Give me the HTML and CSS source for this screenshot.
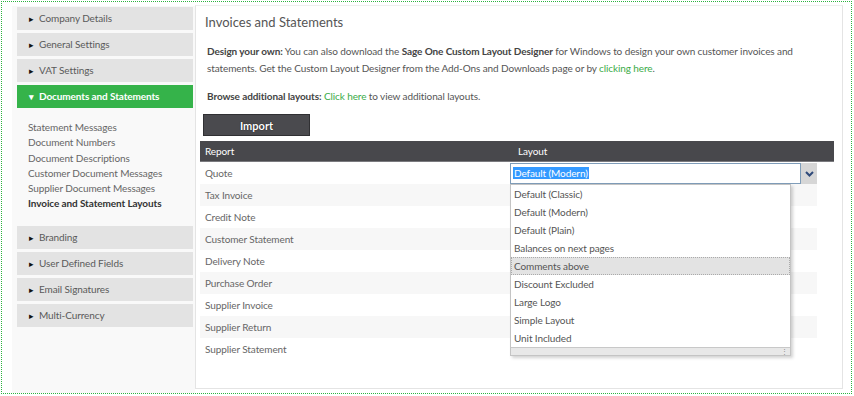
FILE: index.html
```html
<!DOCTYPE html>
<html lang="en">
<head>
    <meta charset="UTF-8">
    <title>Invoices and Statements</title>
    <link rel="stylesheet" href="styles.css">
</head>
<body>

<div class="frame">
    <!-- 左侧设置菜单 -->
    <div class="sidebar">
        <div class="menu-item"><span class="arrow">&#9656;</span>Company Details</div>
        <div class="menu-item"><span class="arrow">&#9656;</span>General Settings</div>
        <div class="menu-item"><span class="arrow">&#9656;</span>VAT Settings</div>
        <div class="menu-item open"><span class="arrow">&#9662;</span>Documents and Statements</div>
        <ul class="sub-menu">
            <li>Statement Messages</li>
            <li>Document Numbers</li>
            <li>Document Descriptions</li>
            <li>Customer Document Messages</li>
            <li>Supplier Document Messages</li>
            <li class="current">Invoice and Statement Layouts</li>
        </ul>
        <div class="menu-item"><span class="arrow">&#9656;</span>Branding</div>
        <div class="menu-item"><span class="arrow">&#9656;</span>User Defined Fields</div>
        <div class="menu-item"><span class="arrow">&#9656;</span>Email Signatures</div>
        <div class="menu-item"><span class="arrow">&#9656;</span>Multi-Currency</div>
    </div>

    <!-- 内容面板 -->
    <div class="panel">
        <h1 class="title">Invoices and Statements</h1>
        <p class="text">
            <b>Design your own:</b> You can also download the <b>Sage One Custom Layout Designer</b> for Windows to design your own customer invoices and<br>
            statements. Get the Custom Layout Designer from the Add-Ons and Downloads page or by <a href="#">clicking here</a>.
        </p>
        <p class="text">
            <b>Browse additional layouts:</b> <a href="#">Click here</a> to view additional layouts.
        </p>
        <button class="btn-import">Import</button>

        <div class="layout-table">
            <div class="table-head">
                <div class="col-report">Report</div>
                <div class="col-layout">Layout</div>
            </div>
            <div class="row">
                <div class="col-report">Quote</div>
                <div class="col-layout">
                    <div class="select">
                        <span class="select-value"><span class="selected-text">Default (Modern)</span></span>
                        <span class="select-btn">
                            <svg width="9" height="6" viewBox="0 0 9 6"><path d="M1 1 L4.5 4.5 L8 1" fill="none" stroke="#2f4a7a" stroke-width="2"/></svg>
                        </span>
                    </div>
                    <ul class="dropdown">
                        <li>Default (Classic)</li>
                        <li>Default (Modern)</li>
                        <li>Default (Plain)</li>
                        <li>Balances on next pages</li>
                        <li class="hover">Comments above</li>
                        <li>Discount Excluded</li>
                        <li>Large Logo</li>
                        <li>Simple Layout</li>
                        <li>Unit Included</li>
                        <li class="grip"><span class="grip-dots">&#8942;</span></li>
                    </ul>
                </div>
            </div>
            <div class="row"><div class="col-report">Tax Invoice</div></div>
            <div class="row"><div class="col-report">Credit Note</div></div>
            <div class="row"><div class="col-report">Customer Statement</div></div>
            <div class="row"><div class="col-report">Delivery Note</div></div>
            <div class="row"><div class="col-report">Purchase Order</div></div>
            <div class="row"><div class="col-report">Supplier Invoice</div></div>
            <div class="row"><div class="col-report">Supplier Return</div></div>
            <div class="row"><div class="col-report">Supplier Statement</div></div>
        </div>
    </div>
</div>

</body>
</html>
```

FILE: styles.css
```css
/* 基本样式 */
body {
    margin: 0;
    background: #fff;
    font-family: "Lato", "Noto Sans", sans-serif;
    font-size: 10px;
    letter-spacing: -0.1px;
    color: #555;
}
.frame {
    margin: 1px;
    width: 849px;
    height: 391px;
    border: 1px dotted #2bb43f;
    display: flex;
}
/* 左侧菜单 */
.sidebar {
    width: 183px;
    box-sizing: border-box;
    margin: 4px 0 0 10px;
    padding: 1px 0 0 5px;
    background: #f9f9f9;
}
.menu-item {
    width: 176px;
    height: 23px;
    line-height: 23px;
    background: #e3e3e3;
    margin-bottom: 3px;
    color: #5a5a5a;
    box-sizing: border-box;
    padding-left: 12px;
    white-space: nowrap;
}
.menu-item .arrow {
    display: inline-block;
    width: 10px;
    color: #111;
    font-size: 9px;
}
.menu-item.open {
    background: #35b34a;
    color: #fff;
    font-weight: bold;
}
.menu-item.open .arrow {
    color: #fff;
}
.sub-menu {
    list-style: none;
    margin: 0;
    padding: 9px 0 14px 11px;
}
.sub-menu li {
    height: 15.3px;
    line-height: 15px;
    color: #666;
    white-space: nowrap;
}
.sub-menu li.current {
    font-weight: bold;
    color: #333;
}
/* 内容面板 */
.panel {
    width: 642px;
    height: 382px;
    margin: 3px 0 0 0;
    border: 1px solid #e4e4e4;
    border-top-color: #eee;
    background: #fff;
    padding: 0 0 0 4px;
}
.title {
    margin: 7px 0 0 5px;
    font-size: 13px;
    font-weight: normal;
    letter-spacing: 0;
    color: #555;
    line-height: 18px;
}
.text {
    margin: 12px 0 0 7px;
    line-height: 17px;
    color: #555;
    white-space: nowrap;
}
.text + .text {
    margin-top: 11px;
}
.text b {
    color: #444;
}
.text a {
    color: #3aab48;
    text-decoration: none;
}
.btn-import {
    display: block;
    margin: 9px 0 0 3px;
    width: 107px;
    height: 22px;
    border: 1px solid #303033;
    background: #4a4a4e;
    color: #fff;
    font-family: inherit;
    font-size: 11px;
    font-weight: bold;
    text-shadow: 0 0 1px #000;
}
/* 表格 */
.layout-table {
    margin-top: 5px;
}
.table-head {
    display: flex;
    width: 634px;
    height: 21px;
    line-height: 20px;
    background: #48484c;
    border-bottom: 1px solid #7a7a7e;
    box-sizing: border-box;
    color: #fff;
}
.col-report {
    width: 308px;
    padding-left: 5px;
    flex-shrink: 0;
}
.col-layout {
    position: relative;
    padding-left: 5px;
}
.row {
    display: flex;
    width: 617px;
    height: 22px;
    line-height: 22px;
    color: #666;
}
.row:nth-of-type(odd) {
    background: #f7f7f7;
}
.row:nth-of-type(2) {
    background: #fff;
}
.row .col-layout {
    padding-left: 0;
    margin-left: -3px;
}
.select {
    display: flex;
    width: 307px;
    height: 21px;
    margin-top: 1px;
    box-sizing: border-box;
}
.select-value {
    flex: 1;
    border: 1px solid #7f9db9;
    background: #fff;
    line-height: 18px;
    padding-left: 2px;
}
.selected-text {
    background: #3399ff;
    color: #fff;
    padding: 0 1px;
}
.select-btn {
    width: 16px;
    background: #d6d6d6;
    display: flex;
    align-items: center;
    justify-content: center;
}
/* 下拉列表 */
.dropdown {
    position: absolute;
    top: 22px;
    left: 0;
    width: 279px;
    margin: 0;
    padding: 0;
    list-style: none;
    background: #fff;
    border: 1px solid #c4c4c4;
    box-shadow: 2px 2px 3px rgba(0, 0, 0, 0.18);
    z-index: 2;
}
.dropdown li {
    height: 18px;
    line-height: 18px;
    padding-left: 3px;
    color: #555;
    box-sizing: border-box;
}
.dropdown li.hover {
    background: #e3e3e3;
    border: 1px dotted #aaa;
    line-height: 16px;
    padding-left: 2px;
}
.dropdown li.grip {
    height: 8px;
    background: #e8e8e8;
    border-top: 1px solid #c8c8c8;
    text-align: right;
    line-height: 6px;
    font-size: 7px;
    color: #888;
    padding-right: 2px;
}
```
